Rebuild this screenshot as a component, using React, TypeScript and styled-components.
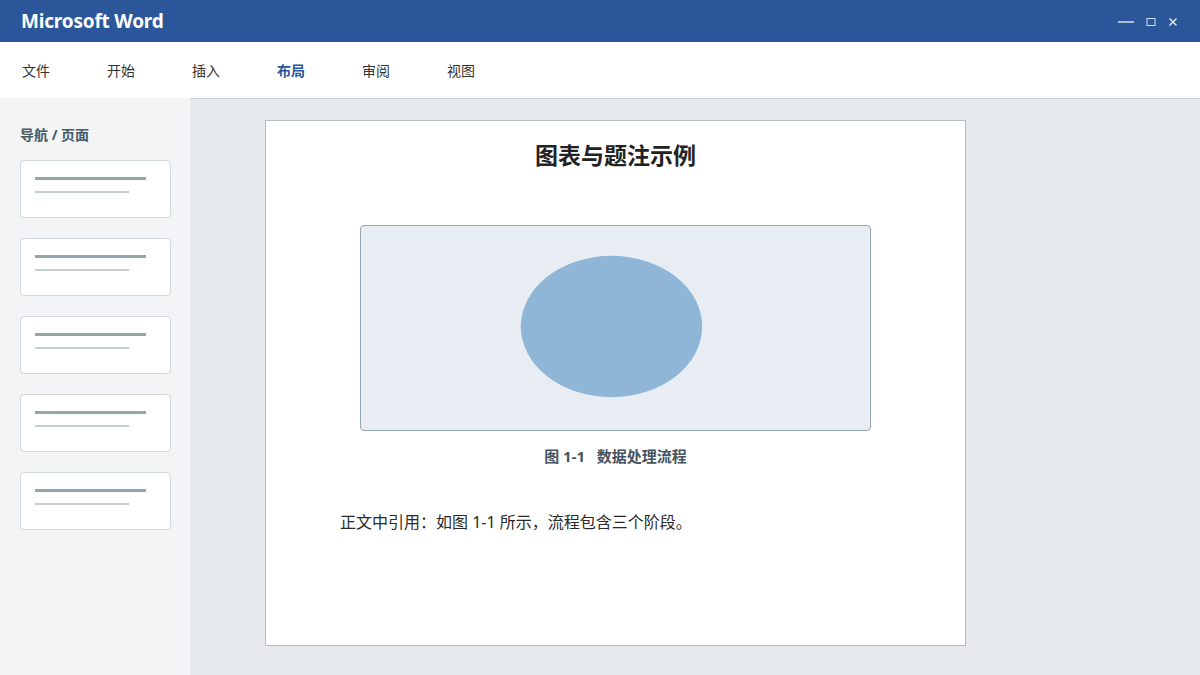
import React from "react";
import styled, { createGlobalStyle } from "styled-components";

const tabs = ["文件", "开始", "插入", "布局", "审阅", "视图"];
const activeTab = "布局";
const pages = [1, 2, 3, 4, 5];

const GlobalStyle = createGlobalStyle`
  html, body {
    margin: 0;
    padding: 0;
  }
  body {
    font-family: "Noto Sans", "Noto Sans CJK SC", sans-serif;
    color: #333;
  }
  * {
    box-sizing: border-box;
  }
`;

export default function App() {
  return (
    <>
      <GlobalStyle />
      <Window>
        <TitleBar>
          <AppTitle>Microsoft Word</AppTitle>
          <Controls>
            <svg width="16" height="10" viewBox="0 0 16 10">
              <line x1="0" y1="5" x2="16" y2="5" stroke="#fff" strokeWidth="1.2" />
            </svg>
            <svg width="10" height="10" viewBox="0 0 10 10">
              <rect x="1" y="1.5" width="8" height="7" fill="none" stroke="#cfe0f5" strokeWidth="1" />
            </svg>
            <svg width="10" height="10" viewBox="0 0 10 10">
              <path d="M1.5 1.5 L8.5 8.5 M8.5 1.5 L1.5 8.5" stroke="#e8eef8" strokeWidth="1.4" />
            </svg>
          </Controls>
        </TitleBar>

        <Ribbon>
          {tabs.map((t) => (
            <Tab key={t} $active={t === activeTab}>
              {t}
            </Tab>
          ))}
        </Ribbon>

        <Body>
          <Sidebar>
            <SideHeading>导航 / 页面</SideHeading>
            {pages.map((p) => (
              <Thumb key={p}>
                <ThumbLine $w={111} $h={3} $c="#95a5ad" />
                <ThumbLine $w={94} $h={2} $c="#c3ced2" />
              </Thumb>
            ))}
          </Sidebar>

          <Workspace>
            <Page>
              <DocTitle>图表与题注示例</DocTitle>
              <Figure>
                <svg width="100%" height="100%" viewBox="0 0 508 203">
                  <ellipse cx="250" cy="100" rx="90.5" ry="70.5" fill="#8fb6d7" />
                </svg>
              </Figure>
              <Caption>图 1-1&nbsp;&nbsp;&nbsp;数据处理流程</Caption>
              <Paragraph>正文中引用：如图 1-1 所示，流程包含三个阶段。</Paragraph>
            </Page>
          </Workspace>
        </Body>
      </Window>
    </>
  );
}

const Window = styled.div`
  width: 1200px;
  height: 675px;
  display: flex;
  flex-direction: column;
  overflow: hidden;
`;

const TitleBar = styled.div`
  height: 42px;
  flex-shrink: 0;
  background-color: #2b579a;
  display: flex;
  align-items: center;
  justify-content: space-between;
  padding: 0 22px 0 21px;
`;

const AppTitle = styled.div`
  color: #fff;
  font-size: 19px;
  font-weight: 700;
  letter-spacing: -0.2px;
`;

const Controls = styled.div`
  display: flex;
  align-items: center;
  gap: 12px;
  padding-top: 1px;

  svg {
    display: block;
  }
`;

const Ribbon = styled.div`
  height: 56px;
  flex-shrink: 0;
  background: #fff;
  display: flex;
  align-items: center;
  gap: 57px;
  padding: 0 22px;
`;

const Tab = styled.div<{ $active?: boolean }>`
  font-size: 14px;
  color: ${(p) => (p.$active ? "#2b579a" : "#333")};
  font-weight: ${(p) => (p.$active ? 700 : 400)};
`;

const Body = styled.div`
  flex: 1;
  display: flex;
  min-height: 0;
`;

const Sidebar = styled.div`
  width: 190px;
  flex-shrink: 0;
  background: #f3f4f6;
  padding: 27px 20px 0;
  display: flex;
  flex-direction: column;
  gap: 20px;
`;

const SideHeading = styled.div`
  font-size: 14px;
  font-weight: 700;
  color: #455a64;
  line-height: 20px;
  margin-bottom: -5px;
`;

const Thumb = styled.div`
  width: 151px;
  height: 58px;
  flex-shrink: 0;
  background: #fff;
  border: 1px solid #d0d9dd;
  border-radius: 4px;
  padding: 16px 0 0 14px;
  display: flex;
  flex-direction: column;
  gap: 11px;
`;

const ThumbLine = styled.div<{ $w: number; $h: number; $c: string }>`
  width: ${(p) => p.$w}px;
  height: ${(p) => p.$h}px;
  background: ${(p) => p.$c};
`;

const Workspace = styled.div`
  flex: 1;
  background: #e6eaed;
  border-top: 1px solid #c8d0d4;
  padding: 21px 0 0 75px;
`;

const Page = styled.div`
  width: 701px;
  height: 526px;
  background: #fff;
  border: 1px solid #b0bdc3;
  padding-top: 18px;
  display: flex;
  flex-direction: column;
`;

const DocTitle = styled.h1`
  margin: 0;
  text-align: center;
  font-size: 23px;
  line-height: 32px;
  font-weight: 700;
  color: #222;
`;

const Figure = styled.div`
  width: 511px;
  height: 206px;
  margin: 54px auto 0;
  background: #e8edf4;
  border: 1px solid #92a6b2;
  border-radius: 4px;
  overflow: hidden;

  svg {
    display: block;
  }
`;

const Caption = styled.div`
  margin-top: 15px;
  text-align: center;
  font-size: 15px;
  line-height: 20px;
  font-weight: 700;
  color: #46545f;
`;

const Paragraph = styled.p`
  margin: 44px 0 0 74px;
  font-size: 16px;
  line-height: 24px;
  color: #2a2a2a;
`;
